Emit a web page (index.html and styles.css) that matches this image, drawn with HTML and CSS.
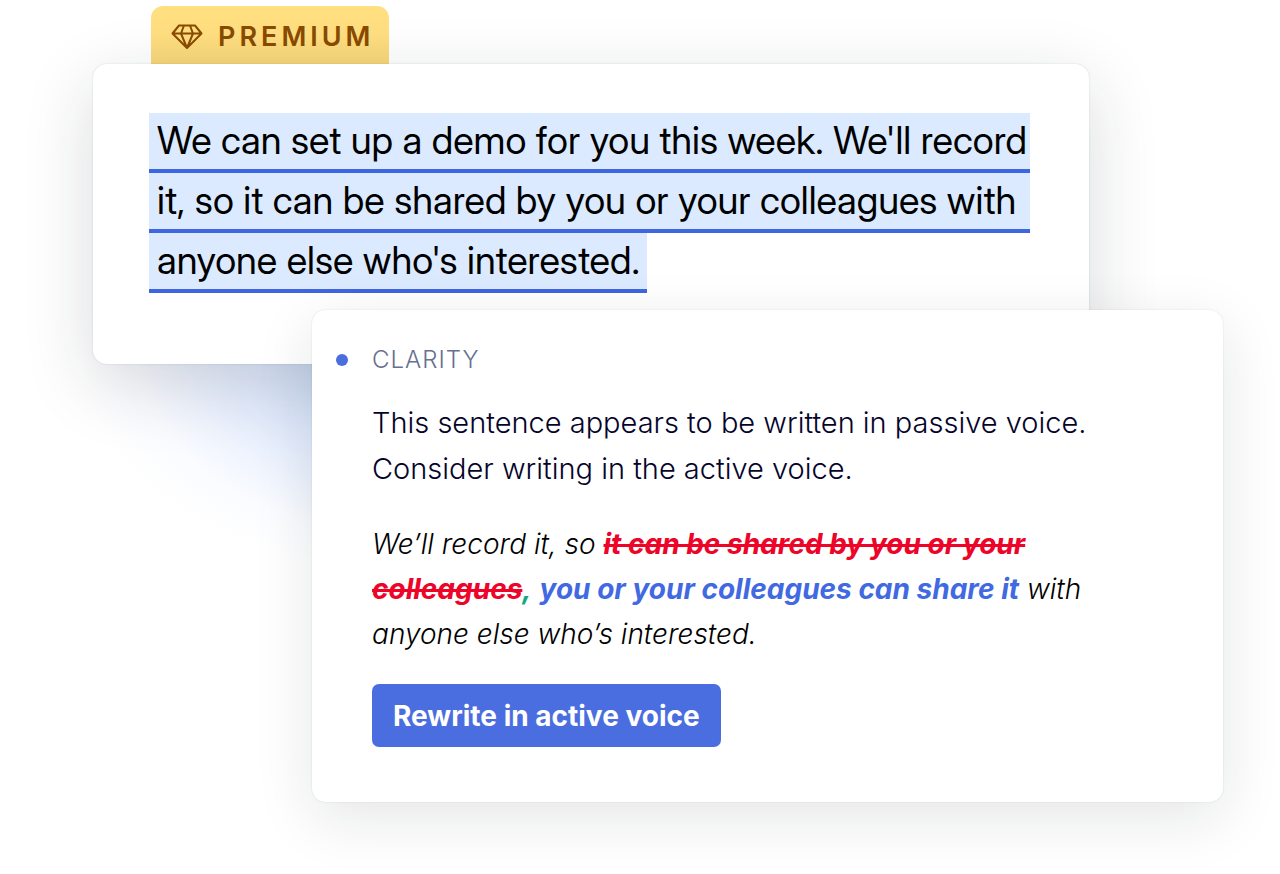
FILE: index.html
```html
<!DOCTYPE html>
<html lang="en">
<head>
<meta charset="utf-8">
<meta name="viewport" content="width=device-width, initial-scale=1">
<title>Clarity suggestion</title>
<link rel="stylesheet" href="styles.css">
</head>
<body>
<main class="stage">
  <div class="badge">
    <svg class="badge-icon" viewBox="0 0 32 26" aria-hidden="true">
      <path d="M8 1.500H24L30.500 9.500L16 24L1.500 9.500ZM1.500 9.500H30.500M13 1.500L10 9.500L16 24L22 9.500L19 1.500"/>
    </svg>
    <span class="badge-label">PREMIUM</span>
  </div>
  <section class="document">
    <p class="passage">
      <span class="line">We can set up a demo for you this week. We'll record</span>
      <span class="line">it, so it can be shared by you or your colleagues with</span>
      <span class="line line-last">anyone else who's interested.</span>
    </p>
  </section>
  <section class="suggestion">
    <h2 class="category"><span class="dot"></span>CLARITY</h2>
    <p class="advice">This sentence appears to be written in passive voice.<br>Consider writing in the active voice.</p>
    <p class="rewrite">We’ll record it, so <del class="removed">it can be shared by you or your<br>colleagues</del><ins class="comma">,</ins> <ins class="added">you or your colleagues can share it</ins> with<br>anyone else who’s interested.</p>
    <button class="action" type="button">Rewrite in active voice</button>
  </section>
</main>
</body>
</html>
```
FILE: styles.css
```css
* {
  box-sizing: border-box;
}

body {
  margin: 0;
  background: #fff;
  color: #000;
  font-family: Inter, "Liberation Sans", sans-serif;
}

.stage {
  position: relative;
  display: flex;
  flex-direction: column;
  padding: 6px 57px 72px 93px;
  overflow: hidden;
}

.badge {
  display: flex;
  align-items: center;
  align-self: flex-start;
  gap: 15px;
  height: 58px;
  margin-left: 58px;
  padding: 3px 14px 0 20px;
  border-radius: 12px 12px 0 0;
  background: linear-gradient(#ffdf80 50%, #f8d67a);
  color: #8a4b00;
}

.badge-icon {
  width: 32px;
  height: 26px;
  fill: none;
  stroke: currentColor;
  stroke-width: 2;
  stroke-linejoin: round;
}

.badge-label {
  font-size: 27px;
  font-weight: 600;
  line-height: 32px;
  letter-spacing: 4px;
}

.document {
  margin-right: 134px;
  padding: 49px 56px 71px;
  border-radius: 14px;
  background: #fff;
  box-shadow: 0 0 2px rgba(20, 30, 60, 0.16), 0 20px 70px rgba(25, 30, 45, 0.16);
}

.document::before {
  content: "";
  position: absolute;
  z-index: -1;
  top: 140px;
  left: 80px;
  width: 640px;
  height: 430px;
  background: radial-gradient(closest-side, rgba(85, 145, 235, 0.34), rgba(110, 155, 245, 0.17) 55%, rgba(130, 170, 250, 0.04) 82%, transparent);
}

.passage {
  width: fit-content;
  margin: 0;
  font-family: "Inter Display", Inter, "Liberation Sans", sans-serif;
  font-size: 38px;
  font-variation-settings: "opsz" 32;
  font-weight: 400;
  line-height: 54px;
}

.line {
  display: block;
  padding: 0 3px 2px 8px;
  border-bottom: 4px solid #3d66e0;
  background: #dbeaff;
  white-space: nowrap;
}

.line-last {
  width: fit-content;
  padding-right: 7px;
}

.suggestion {
  position: relative;
  margin: -54px 0 0 219px;
  padding: 34px 60px 55px;
  border-radius: 14px;
  background: #fff;
  box-shadow: 0 0 2px rgba(20, 30, 60, 0.12), 0 16px 60px rgba(20, 25, 40, 0.11);
}

.category {
  position: relative;
  margin: 0 0 24px;
  color: #66708f;
  font-size: 24px;
  font-weight: 300;
  line-height: 32px;
  letter-spacing: 1px;
}

.dot {
  position: absolute;
  top: 10px;
  left: -36px;
  width: 12px;
  height: 12px;
  border-radius: 50%;
  background: #4a6ee0;
}

.advice,
.rewrite {
  margin: 0;
  font-weight: 300;
}

.advice {
  margin-bottom: 30px;
  color: #04042a;
  font-size: 29px;
  line-height: 46px;
}

.rewrite {
  margin-bottom: 27px;
  font-size: 28px;
  font-style: italic;
  line-height: 45px;
}

.removed {
  color: #ed0429;
  font-weight: 700;
  text-decoration-thickness: 3px;
}

.comma,
.added {
  font-weight: 700;
  text-decoration: none;
}

.comma {
  color: #15a683;
}

.added {
  color: #4169e1;
}

.action {
  display: block;
  padding: 15px 21px 13px;
  border: 0;
  border-radius: 7px;
  background: #4a6ee0;
  color: #fff;
  font-family: inherit;
  font-size: 28px;
  font-weight: 700;
  line-height: 35px;
}
```
